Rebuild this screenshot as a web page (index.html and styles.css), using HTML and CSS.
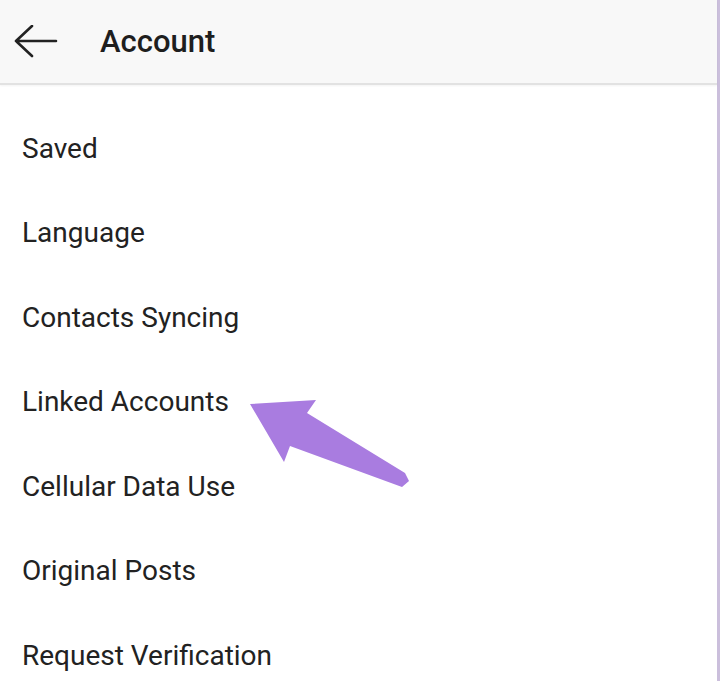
FILE: index.html
```html
<!DOCTYPE html>
<html>
<head>
<meta charset="utf-8">
<link rel="stylesheet" href="styles.css">
</head>
<body>
<div class="screen">
  <div class="phone">
    <header class="topbar">
      <svg class="back" width="44" height="34" viewBox="0 0 44 34">
        <path d="M42 16 H2 M18 1 L2 16 L18 31" fill="none" stroke="#222" stroke-width="2.6" stroke-linecap="round" stroke-linejoin="round"/>
      </svg>
      <h1 class="title">Account</h1>
    </header>
    <ul class="menu">
      <li class="item">Saved</li>
      <li class="item">Language</li>
      <li class="item">Contacts Syncing</li>
      <li class="item">Linked Accounts</li>
      <li class="item">Cellular Data Use</li>
      <li class="item">Original Posts</li>
      <li class="item">Request Verification</li>
    </ul>
    <svg class="pointer" width="720" height="681" viewBox="0 0 720 681">
      <polygon points="250,404 316,400 307,413 405,473 409,481 402,487 290,446 284,462" fill="#a97ce0"/>
    </svg>
  </div>
  <div class="edge"></div>
</div>
</body>
</html>
```
FILE: styles.css
```css
html, body {
  margin: 0;
  padding: 0;
  background: #ffffff;
}
.screen {
  display: flex;
  width: 720px;
  height: 681px;
  overflow: hidden;
}
.phone {
  position: relative;
  flex: 1;
  display: flex;
  flex-direction: column;
  font-family: Roboto, "Liberation Sans", sans-serif;
  color: #222;
}
.edge {
  width: 3px;
  background: #cbbfdc;
}
.topbar {
  height: 83px;
  flex: none;
  display: flex;
  align-items: center;
  background: #f8f8f8;
  border-bottom: 2px solid #e2e2e2;
  box-shadow: 0 1px 2px rgba(0,0,0,0.05);
}
.back {
  margin-left: 14px;
  margin-right: 42px;
  margin-top: 1px;
}
.title {
  margin: 0;
  font-size: 31px;
  font-weight: 500;
  color: #1e1e1e;
}
.menu {
  list-style: none;
  margin: 0;
  padding: 21px 0 0 22px;
}
.item {
  height: 84.5px;
  display: flex;
  align-items: center;
  font-size: 28px;
  color: #222;
}
.pointer {
  position: absolute;
  left: 0;
  top: 0;
  pointer-events: none;
}
```
